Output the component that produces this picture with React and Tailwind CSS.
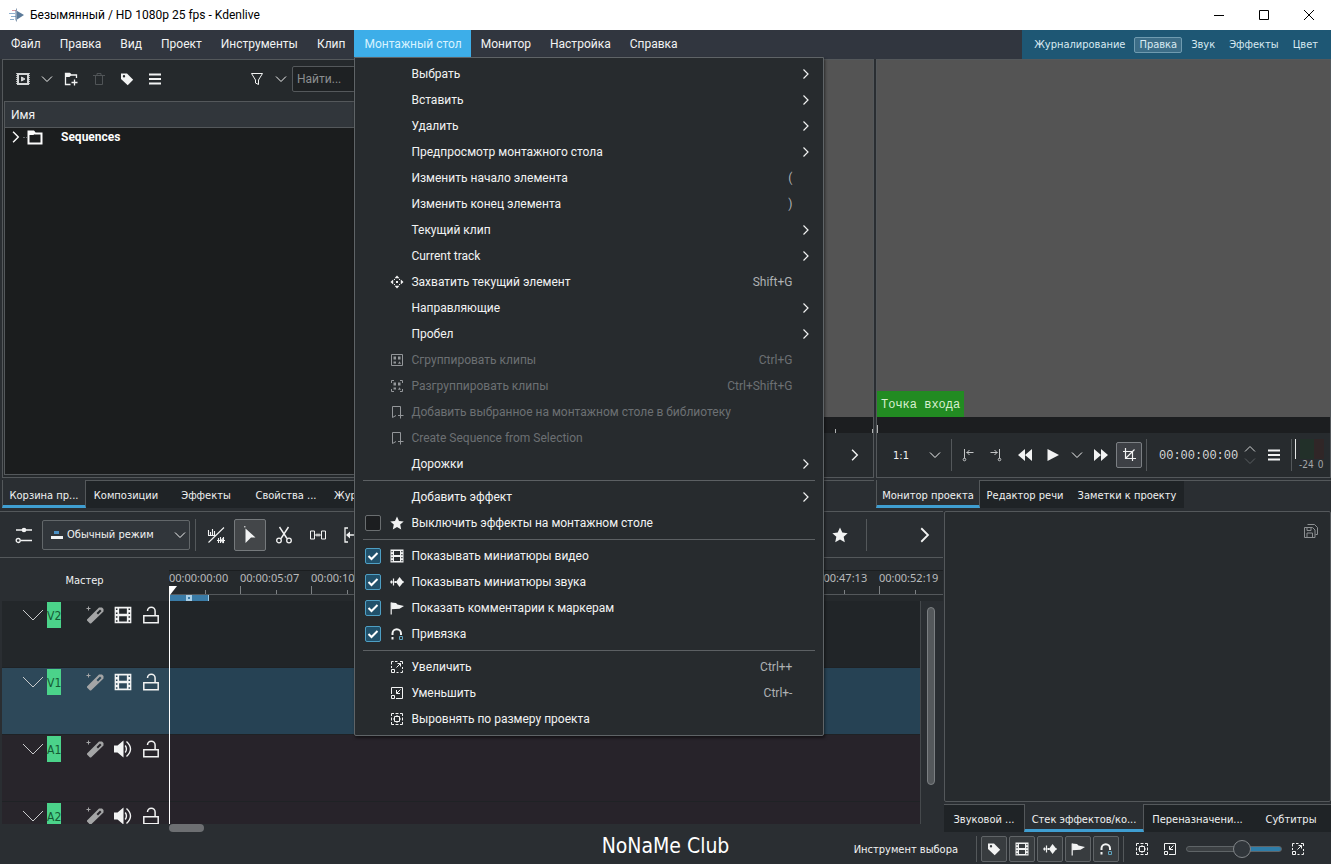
import { useState } from 'react';
import clsx from 'clsx';

const Svg = ({ size = 16, box = 16, className, children }) => (
  <svg
    width={size}
    height={size}
    viewBox={`0 0 ${box} ${box}`}
    fill="none"
    stroke="currentColor"
    className={clsx('shrink-0', className)}
    aria-hidden="true"
  >
    {children}
  </svg>
);

const ChevronDown = ({ size = 12, className }) => (
  <Svg size={size} box={12} className={className}>
    <path d="M1 3.5 6 8.5 11 3.5" />
  </Svg>
);

const ChevronRight = ({ size = 12, className }) => (
  <Svg size={size} box={12} className={className}>
    <path d="M3.5 1.5 8 6 3.5 10.5" strokeWidth="1.2" />
  </Svg>
);

const TagIcon = ({ size = 14 }) => (
  <Svg size={size} box={14}>
    <path
      d="M1 1.5h6l6.2 6.2-5.5 5.5L1 7ZM4 3a1.2 1.2 0 1 0 0 2.4A1.2 1.2 0 0 0 4 3Z"
      fill="currentColor"
      stroke="none"
      fillRule="evenodd"
    />
  </Svg>
);

const BurgerIcon = ({ size = 14 }) => (
  <Svg size={size} box={14}>
    <path d="M1 2.5h12M1 7h12M1 11.5h12" strokeWidth="2" />
  </Svg>
);

const ClipIcon = () => (
  <Svg size={14} box={14} className="text-[#d4d6d7]">
    <path d="M2 2h10v10H2z" strokeWidth="2" />
    <path d="M1 1v12M13 1v12" strokeWidth="1.6" strokeDasharray="1 1" />
    <path d="M5.5 5v4l3.5-2z" fill="currentColor" />
  </Svg>
);

const FolderAddIcon = () => (
  <Svg size={16}>
    <path d="M7.5 13.5H2.5V2.5h4l1.5 1.5h5.5V7M11.5 8.5v6M8.5 11.5h6" strokeWidth="1.3" />
    <path d="M2 2h5l1.5 2-2 2H2z" fill="currentColor" stroke="none" />
  </Svg>
);

const TrashIcon = () => (
  <Svg size={14} box={14}>
    <path d="M1 3.5h12M5 3.5v-2h4v2M3.5 3.5v9h7v-9" />
  </Svg>
);

const FunnelIcon = () => (
  <Svg size={14} box={14}>
    <path d="M1.5 1.5h11L8.5 8v4.5l-3-1.5V8Z" />
  </Svg>
);

const FolderIcon = () => (
  <Svg size={16}>
    <path d="M1.5 14.5v-12h5L8 4.5h6.5v10z" strokeWidth="2" />
    <path d="M1 2h6l1.5 2-2 2H1z" fill="currentColor" stroke="none" />
  </Svg>
);

const MoveIcon = ({ size = 14 }) => (
  <Svg size={size} box={14}>
    <path
      d="M7 .5 9.5 3.2h-5ZM7 13.5 9.5 10.8h-5ZM.5 7 3.2 4.5v5ZM13.5 7 10.8 4.5v5ZM6 6h2v2H6zM4 4h1v1H4zM9 4h1v1H9zM4 9h1v1H4zM9 9h1v1H9z"
      fill="currentColor"
      stroke="none"
    />
  </Svg>
);

const groupShapes = (
  <path d="M3.5 3.5H6v3H3.5zM8 3.5h2.5v3H8zM3.5 8.5H6v2H3.5zM8 10.8h3L9.5 8.2z" fill="currentColor" stroke="none" />
);

const GroupIcon = () => (
  <Svg size={14} box={14}>
    <path d="M1.5 1.5h11v11h-11z" />
    {groupShapes}
  </Svg>
);

const UngroupIcon = () => (
  <Svg size={14} box={14}>
    <path d="M4 1.5H1.5V4M10 1.5h2.5V4M4 12.5H1.5V10M10 12.5h2.5V10" />
    {groupShapes}
  </Svg>
);

const BookmarkAddIcon = () => (
  <Svg size={14} box={14}>
    <path d="M6 10.5l-3.5 2v-11h8v7M10.5 8v5.5M8 10.5h5.5" />
  </Svg>
);

const StarIcon = ({ size = 14 }) => (
  <Svg size={size} box={14}>
    <path d="m7 .5 2 4.4 4.7.5-3.5 3.2 1 4.8L7 11l-4.2 2.4 1-4.8L.3 5.4 5 4.9Z" fill="currentColor" stroke="none" />
  </Svg>
);

const FilmIcon = ({ size = 14 }) => (
  <Svg size={size} box={14}>
    <path
      d="M.5.5h13v13H.5zM4 2v4h6V2zM4 8v4h6V8zM1.5 2v1.2h1.2V2zM1.5 5v1.2h1.2V5zM1.5 8v1.2h1.2V8zM1.5 11v1.2h1.2V11zM11.3 2v1.2h1.2V2zM11.3 5v1.2h1.2V5zM11.3 8v1.2h1.2V8zM11.3 11v1.2h1.2V11z"
      fill="currentColor"
      stroke="none"
      fillRule="evenodd"
    />
  </Svg>
);

const WaveIcon = ({ size = 14 }) => (
  <Svg size={size} box={14}>
    <path d="M0 7h14M1.5 5.5v3M3.5 3.5v7M5.5 6v2" strokeWidth="1.2" />
    <path d="m9.5 2 4 5-4 5L6 7z" fill="currentColor" stroke="none" />
  </Svg>
);

const FlagIcon = ({ size = 14 }) => (
  <Svg size={size} box={14}>
    <path d="M1.2 1.5v12" strokeWidth="1.2" />
    <path d="M1.2 1.5 6 2l1.5 1.5L14 5 9.5 7.8l-8.3.4z" fill="currentColor" stroke="none" />
  </Svg>
);

const MagnetIcon = ({ size = 14 }) => (
  <Svg size={size} box={14}>
    <path d="M2.5 8V6.5a4 4 0 0 1 8.5 0V8" strokeWidth="2" />
    <path d="M2.5 10v2.5" strokeWidth="2" />
    <path d="M9.5 9.5h3v3h-3z" className="text-[#5fa3bd]" stroke="currentColor" />
  </Svg>
);

const ZoomInIcon = ({ size = 14 }) => (
  <Svg size={size} box={14}>
    <path d="M3.5 1.5h-2v3M1.5 6v2M5 1.5h2.5M12.5 7v2M12.5 10.5v2h-2M6.5 12.5h2M6.5 7.5l4-4M7.5 3.5h3v3M10 1.5h2.5V4M1.5 9.5h3v3h-3z" />
  </Svg>
);

const ZoomOutIcon = ({ size = 14 }) => (
  <Svg size={size} box={14}>
    <path d="M1.5 8V1.5h11v11H6M10.5 3.5l-4 4M6.5 4v3.5H10M1.5 9.5h3v3h-3z" />
  </Svg>
);

const ZoomFitIcon = ({ size = 14 }) => (
  <Svg size={size} box={14}>
    <path d="M1.5 4V1.5H4M10 1.5h2.5V4M4 12.5H1.5V10M10 12.5h2.5V10M5.5 1.5h3M5.5 12.5h3M1.5 5.5v3M12.5 5.5v3" />
    <path d="M4.5 4.5h5v5h-5zM7 3v1.5M7 9.5V11M3 7h1.5M9.5 7H11" />
  </Svg>
);

const LockIcon = () => (
  <Svg size={18} box={18}>
    <path d="M1.8 9.8h14.4v7H1.8zM5.500 5a3.800 3.800 0 0 1 7.600 0v4.800" strokeWidth="1.5" />
  </Svg>
);

const WandIcon = () => (
  <Svg size={18} box={18} className="text-[#a4a5a6]">
    <path
      d="M1 13.5 13 1.5h3l1.5 1.5v2.5L5 17.5H4L1 14.5ZM10.5 7 12 8.5 15.5 5 14 3.5Z"
      fill="currentColor"
      stroke="none"
      fillRule="evenodd"
    />
    <path d="M2.5.5v4M.5 2.5h4" />
  </Svg>
);

const SpeakerIcon = () => (
  <Svg size={18} box={18}>
    <path d="M0 5.5h3.500L9.500.5v17l-6-5H0z" fill="currentColor" stroke="none" />
    <path d="M11.2 5.5q2.500 3.500 0 7M12.500 1.500q8 7.500 0 15" strokeWidth="1.4" />
  </Svg>
);

const MixIcon = () => (
  <Svg size={18} box={18}>
    <path d="M1 4h16M5.5 14.5H17" strokeWidth="1.3" />
    <circle cx="9" cy="4" r="2.3" fill="currentColor" stroke="none" />
    <circle cx="3.2" cy="14.5" r="2" strokeWidth="1.3" />
  </Svg>
);

const NoWaveIcon = () => (
  <Svg size={18} box={18}>
    <path d="M1.5 16.5 17 1.5M1.5 4v5M3.5 6v3M5.5 3v6M7.5 5v4M1 9.5h8M10 14.5h8M11.5 12v5M13.5 11v6M16.5 11v6M14.5 14l2-2M14.5 15l2 2" strokeWidth="1.1" />
  </Svg>
);

const PointerIcon = () => (
  <Svg size={18} box={18}>
    <path d="m4.5 2.5 10 9H10L4.5 17z" fill="currentColor" stroke="none" />
    <path d="M3 .8h1.5" />
  </Svg>
);

const ScissorsIcon = () => (
  <Svg size={18} box={18}>
    <path d="m4.5 1 7.5 11.5M13.5 1 6 12.5" strokeWidth="1.4" />
    <circle cx="4" cy="14.5" r="2.3" strokeWidth="1.3" />
    <circle cx="14" cy="14.5" r="2.3" strokeWidth="1.3" />
  </Svg>
);

const SpacerIcon = () => (
  <Svg size={18} box={18}>
    <path d="M1.5 5h4v8h-4zM12.5 5h4v8h-4zM6 9h6M8 7.5v3M10 7.5v3" />
  </Svg>
);

const SlipIcon = () => (
  <Svg size={18} box={18}>
    <path d="M5 2H2v14h3M13 2h3v14h-3M4 9h10" strokeWidth="1.3" />
    <path d="m3 9 4-3.5v7z" fill="currentColor" stroke="none" />
  </Svg>
);

const AppIcon = () => (
  <Svg size={16}>
    <path d="M0 6.5h6M2 9.5h5M1 12.5h4" className="text-[#8fb0cf]" stroke="currentColor" />
    <path d="M3 3.5h4" className="text-[#d99aa5]" stroke="currentColor" />
    <path d="M6.5 3v10.5L15 8z" className="text-[#5b7a99]" fill="currentColor" stroke="none" />
    <path d="M7.5 1.5v13" className="text-[#8c9fb5]" stroke="currentColor" />
  </Svg>
);

const SaveIcon = () => (
  <Svg size={14} box={14} className="text-[#8d9092]">
    <path d="M3.5.5h7l3 3v7h-2M.5 13.5v-10h8L11 6v7.5zM3 3.5v3h4v-3M3 13V9h5.5v4" />
  </Svg>
);

const menuBefore = ['Файл', 'Правка', 'Вид', 'Проект', 'Инструменты', 'Клип'];
const menuAfter = ['Монитор', 'Настройка', 'Справка'];
const layouts = ['Журналирование', 'Правка', 'Звук', 'Эффекты', 'Цвет'];

const menuSections = [
  [
    { text: 'Выбрать', sub: true },
    { text: 'Вставить', sub: true },
    { text: 'Удалить', sub: true },
    { text: 'Предпросмотр монтажного стола', sub: true },
    { text: 'Изменить начало элемента', keys: '(' },
    { text: 'Изменить конец элемента', keys: ')' },
    { text: 'Текущий клип', sub: true },
    { text: 'Current track', sub: true },
    { text: 'Захватить текущий элемент', keys: 'Shift+G', icon: MoveIcon },
    { text: 'Направляющие', sub: true },
    { text: 'Пробел', sub: true },
    { text: 'Сгруппировать клипы', keys: 'Ctrl+G', icon: GroupIcon, disabled: true },
    { text: 'Разгруппировать клипы', keys: 'Ctrl+Shift+G', icon: UngroupIcon, disabled: true },
    { text: 'Добавить выбранное на монтажном столе в библиотеку', icon: BookmarkAddIcon, disabled: true },
    { text: 'Create Sequence from Selection', icon: BookmarkAddIcon, disabled: true },
    { text: 'Дорожки', sub: true },
  ],
  [
    { text: 'Добавить эффект', sub: true },
    { text: 'Выключить эффекты на монтажном столе', icon: StarIcon, check: false },
  ],
  [
    { text: 'Показывать миниатюры видео', icon: FilmIcon, check: true },
    { text: 'Показывать миниатюры звука', icon: WaveIcon, check: true },
    { text: 'Показать комментарии к маркерам', icon: FlagIcon, check: true },
    { text: 'Привязка', icon: MagnetIcon, check: true },
  ],
  [
    { text: 'Увеличить', keys: 'Ctrl++', icon: ZoomInIcon },
    { text: 'Уменьшить', keys: 'Ctrl+-', icon: ZoomOutIcon },
    { text: 'Выровнять по размеру проекта', icon: ZoomFitIcon },
  ],
];

const rulerMarks = [
  '00:00:00:00', '00:00:05:07', '00:00:10:14', '00:00:15:21', '00:00:21:03', '00:00:26:10',
  '00:00:31:16', '00:00:36:23', '00:00:42:05', '00:00:47:13', '00:00:52:19',
];

const tracks = [
  { id: 'V2', audio: false, head: 'bg-[#23272a]', body: 'bg-[#212528]' },
  { id: 'V1', audio: false, head: 'bg-[#2d4859]', body: 'bg-[#264254]' },
  { id: 'A1', audio: true, head: 'bg-[#28252b]', body: 'bg-[#27232a]' },
  { id: 'A2', audio: true, head: 'bg-[#28252b]', body: 'bg-[#27232a]' },
];

// docks and status bar use the narrower face, menus and the bin keep Roboto
const dockFont = "font-['DejaVu_Sans_Condensed','DejaVu_Sans',sans-serif] text-[11px]";

const MenuItem = ({ item }) => {
  const [checked, setChecked] = useState(item.check);
  const Icon = item.icon;
  const isCheck = item.check !== undefined;
  const Row = isCheck ? 'label' : 'button';

  return (
    <Row
      disabled={isCheck ? undefined : item.disabled}
      className={clsx(
        'flex h-[26px] w-full items-center pl-2.5 pr-[11px] text-left',
        item.disabled ? 'text-[#6c7073]' : 'text-[#f2f3f3] hover:bg-[#31363b]'
      )}
    >
      <span className="relative h-4 w-4 shrink-0">
        {isCheck && (
          <>
            <input
              type="checkbox"
              checked={checked}
              onChange={(e) => setChecked(e.target.checked)}
              className="block h-4 w-4 appearance-none rounded-xs border border-[#6a6e70] bg-[#1c1e20] checked:border-[#4e9fc4] checked:bg-[#21516b]"
            />
            {checked && (
              <Svg className="pointer-events-none absolute left-0 top-0 text-white">
                <path d="m3.5 8 3 3 6-6" strokeWidth="2" />
              </Svg>
            )}
          </>
        )}
      </span>
      <span className={clsx('ml-[9px] flex w-3.5 shrink-0', item.disabled && 'text-[#94979a]')}>{Icon && <Icon />}</span>
      <span className="ml-[7px] flex-1 whitespace-nowrap">{item.text}</span>
      <span className={item.disabled ? 'text-[#6c7073]' : 'text-[#aeb1b3]'}>{item.keys}</span>
      <span className="ml-2 flex w-3">{item.sub && <ChevronRight />}</span>
    </Row>
  );
};

const TimelineMenu = () => (
  <div className="absolute left-0 top-full z-20 w-[470px] rounded-b-xs border border-[#5f6467] bg-[#272b2e] py-[3px] shadow-[1px_2px_3px_#00000080]">
    {menuSections.map((section, i) => (
      <div key={i}>
        {i > 0 && <hr className="mx-2 my-[3px] border-[#5c6063]" />}
        {section.map((item) => (
          <MenuItem key={item.text} item={item} />
        ))}
      </div>
    ))}
  </div>
);

const DockTab = ({ active, className, children }) => (
  <button
    className={clsx(
      'h-7 whitespace-nowrap text-center text-[#f0f1f1]',
      active
        ? 'border-x border-b-3 border-x-[#54585b] border-b-[#3f9ed1] bg-[#2a2e32] pt-[7px]'
        : 'border-t border-t-[#54585b] bg-[#1f2326] pt-[3px]',
      className
    )}
  >
    {children}
  </button>
);

const IconButton = ({ label, className, children }) => (
  <button aria-label={label} className={clsx('flex shrink-0 items-center justify-center', className)}>
    {children}
  </button>
);

const Divider = ({ className }) => <span className={clsx('w-px shrink-0 bg-[#54585b]', className)} />;

const ProjectBin = () => (
  <section className="flex w-[500px] shrink-0 flex-col pl-0.5">
    <div className="flex min-h-0 flex-1 flex-col border border-[#54585b] bg-[#25292c] pb-0.5 pl-px font-['Roboto',sans-serif] text-xs">
      <div className="flex h-[41px] shrink-0 items-center pb-[3px] text-[#f2f3f3]">
        <IconButton label="Добавить клип" className="ml-[5px] w-7"><ClipIcon /></IconButton>
        <IconButton label="Список" className="w-5"><ChevronDown /></IconButton>
        <IconButton label="Создать папку" className="w-7"><FolderAddIcon /></IconButton>
        <IconButton label="Удалить клип" className="w-7 text-[#505457]"><TrashIcon /></IconButton>
        <IconButton label="Метки" className="w-7"><TagIcon /></IconButton>
        <IconButton label="Параметры" className="w-7"><BurgerIcon /></IconButton>
        <IconButton label="Фильтр" className="ml-[74px] w-7"><FunnelIcon /></IconButton>
        <IconButton label="Список фильтров" className="mr-px w-5"><ChevronDown /></IconButton>
        <input
          aria-label="Найти"
          placeholder="Найти..."
          className="h-[26px] w-40 rounded-xs border border-[#54585b] bg-[#1e2123] px-1 placeholder:text-[#8b8e90]"
        />
      </div>
      <div className="flex min-h-0 flex-1 flex-col border border-[#54585b] bg-[#1b1d1e]">
        <div className="h-[26px] shrink-0 border-b border-[#54585b] bg-[#31363b] pl-1.5 leading-[26px] text-[#f2f3f3]">Имя</div>
        <div className="flex h-[18px] items-center pl-1 text-[#fcfcfc]">
          <ChevronRight size={14} />
          <span className="w-1 border-t border-dotted border-[#65696c]" />
          <FolderIcon />
          <span className="ml-[18px] font-bold">Sequences</span>
        </div>
      </div>
    </div>
    <nav className="mt-0.5 flex">
      <DockTab active className="w-[84px]">Корзина пр...</DockTab>
      <DockTab className="w-20">Композиции</DockTab>
      <DockTab className="w-20">Эффекты</DockTab>
      <DockTab className="w-20">Свойства ...</DockTab>
      <DockTab className="flex-1 pl-2 text-left">Журнал действий</DockTab>
    </nav>
  </section>
);

const ClipMonitor = () => (
  <section className="flex min-w-0 flex-1 flex-col">
    <div className="flex min-h-0 flex-1 flex-col border border-[#54585b]">
      <div className="flex-1 bg-[#545454]" />
      <div className="flex h-4 items-end justify-end bg-[#1c1e20]">
        <span className="mr-9 h-1 w-px bg-[#b0b2b3]" />
        <span className="h-1 w-px bg-[#b0b2b3]" />
      </div>
      <div className="flex h-11 items-center justify-end bg-[#272b2e] text-[#f2f3f3]">
        <IconButton label="Ещё" className="mr-1 w-7"><ChevronRight size={14} /></IconButton>
      </div>
    </div>
    <div className="mt-0.5 h-7 border-t border-[#54585b]" />
  </section>
);

const ProjectMonitor = () => (
  <section className="flex w-[455px] shrink-0 flex-col">
    <div className="flex min-h-0 flex-1 flex-col border border-[#54585b]">
      <div className="flex flex-1 flex-col items-start justify-end bg-[#545454]">
        <span className="h-[26px] bg-[#228b22] px-1 font-['Liberation_Mono',monospace] text-xs leading-[28px] text-[#d7f0d0]">
          Точка входа
        </span>
      </div>
      <div className="flex h-4 items-end bg-[#1c1e20]">
        <span className="h-2 w-px bg-[#b0b2b3]" />
      </div>
      <div className="flex h-11 items-center bg-[#272b2e] text-[#f2f3f3]">
        <div className="relative w-[74px]">
          <select aria-label="Масштаб" className="h-6 w-full appearance-none pl-4 pt-0.5">
            <option>1:1</option>
          </select>
          <ChevronDown className="pointer-events-none absolute right-2.5 top-1.5" />
        </div>
        <Divider className="mr-0.5 h-8" />
        <IconButton label="Начало зоны" className="h-8 w-7 text-[#c4c6c7]">
          <Svg size={14} box={14}>
            <path d="M3.5 1v9.5M5.5 4.5h7M8.5 2 6 4.500 8.500 7" />
            <circle cx="3.5" cy="11.5" r="1.3" />
          </Svg>
        </IconButton>
        <IconButton label="Конец зоны" className="h-8 w-7 text-[#c4c6c7]">
          <Svg size={14} box={14}>
            <path d="M10.5 1v9.5M1.5 4.5h7M5.5 2 8 4.500 5.500 7" />
            <circle cx="10.5" cy="11.5" r="1.3" />
          </Svg>
        </IconButton>
        <IconButton label="Назад" className="ml-px h-8 w-7">
          <Svg size={14} box={14}>
            <path d="M7 1v12L0 7zM14 1v12L7 7z" fill="currentColor" stroke="none" />
          </Svg>
        </IconButton>
        <IconButton label="Воспроизвести" className="h-8 w-7">
          <Svg size={14} box={14}>
            <path d="M1.5 1v12L13 7z" fill="currentColor" stroke="none" />
          </Svg>
        </IconButton>
        <IconButton label="Режим воспроизведения" className="h-8 w-5"><ChevronDown /></IconButton>
        <IconButton label="Вперёд" className="h-8 w-7">
          <Svg size={14} box={14}>
            <path d="M0 1v12l7-6zM7 1v12l7-6z" fill="currentColor" stroke="none" />
          </Svg>
        </IconButton>
        <IconButton label="Режим правки" className="ml-px h-[26px] w-[26px] rounded-xs border border-[#7c8084] bg-[#3d4045]">
          <Svg size={14} box={14}>
            <path d="M3.5 0v10.5H14M1 3.5h9.5V13M4 10l8.5-8.5" strokeWidth="1.2" />
          </Svg>
        </IconButton>
        <Divider className="ml-1 h-8" />
        <input
          aria-label="Позиция"
          defaultValue="00:00:00:00"
          className="ml-3 w-[83px] bg-transparent pt-0.5 font-['Liberation_Mono',monospace] text-xs text-[#d5d7d8]"
        />
        <div className="flex w-4 flex-col items-center">
          <IconButton label="Больше" className="rotate-180 text-[#d0d2d3]"><ChevronDown size={12} /></IconButton>
          <IconButton label="Меньше" className="text-[#5a5e61]"><ChevronDown size={12} /></IconButton>
        </div>
        <IconButton label="Меню монитора" className="h-8 w-8"><BurgerIcon /></IconButton>
        <Divider className="ml-px h-8" />
        <div className="ml-[3px] flex h-8 flex-1 flex-col text-[10px] leading-3 text-[#a4a6a8]">
          <div className="flex h-5">
            <span className="w-px bg-[#e4e5e5]" />
            <span className="ml-1 w-3.5 bg-[#223029]" />
            <span className="w-2.5 bg-[#302627]" />
          </div>
          <div className="flex gap-1 pl-1"><span>-24</span><span>0</span></div>
        </div>
      </div>
    </div>
    <nav className="mt-0.5 flex">
      <DockTab active className="w-[104px]">Монитор проекта</DockTab>
      <DockTab className="w-[90px]">Редактор речи</DockTab>
      <DockTab className="w-[114px]">Заметки к проекту</DockTab>
      <span className="flex-1 border-t border-[#54585b]" />
    </nav>
  </section>
);

const TimelineToolbar = () => (
  <div className="flex h-[47px] shrink-0 items-center border-y border-[#54585b] text-[#f2f3f3]">
    <IconButton label="Настройки дорожек" className="ml-2.5 w-7"><MixIcon /></IconButton>
    <div className="relative ml-1 w-[148px]">
      <select
        aria-label="Режим правки"
        className="h-[30px] w-full appearance-none rounded-xs border border-[#62676a] bg-[#31363b] pl-6 pt-0.5"
      >
        <option>Обычный режим</option>
      </select>
      <Svg size={14} box={14} className="pointer-events-none absolute left-2 top-2">
        <path d="M1 9.5h12" strokeWidth="3" />
        <path d="M4 4.5h5" strokeWidth="3" className="text-[#4a90c4]" stroke="currentColor" />
      </Svg>
      <ChevronDown className="pointer-events-none absolute right-1 top-[9px]" />
    </div>
    <Divider className="ml-[5px] h-8" />
    <IconButton label="Смешать клипы" className="ml-1 mr-0.5 h-8 w-8"><NoWaveIcon /></IconButton>
    <IconButton label="Выделение" className="h-8 w-8 rounded-xs border border-[#75797c] bg-[#434649]"><PointerIcon /></IconButton>
    <IconButton label="Разрезать" className="ml-0.5 h-8 w-8"><ScissorsIcon /></IconButton>
    <IconButton label="Раздвижка" className="ml-0.5 h-8 w-8"><SpacerIcon /></IconButton>
    <IconButton label="Сдвиг" className="ml-0.5 h-8 w-8"><SlipIcon /></IconButton>
    <span className="flex-1" />
    <IconButton label="Избранные эффекты" className="w-8"><StarIcon size={16} /></IconButton>
    <Divider className="ml-2.5 mr-[42px] h-8" />
    <IconButton label="Ещё" className="mr-0.5 w-8"><ChevronRight size={18} /></IconButton>
  </div>
);

const TrackHead = ({ track }) => (
  <div className={clsx('flex w-[167px] shrink-0 items-start pt-[5px] text-[#f2f3f3]', track.head)}>
    <IconButton label="Свернуть" className="ml-5 h-[18px] w-[22px] text-[#c9cbcc]">
      <svg width="22" height="12" viewBox="0 0 22 12" fill="none" stroke="currentColor">
        <path d="M1 1 11 11 21 1" />
      </svg>
    </IconButton>
    <span className="-mt-1 ml-[3px] h-[26px] w-3.5 bg-[#4bd38a] text-center text-xs leading-[28px] text-[#155a34]">{track.id}</span>
    <IconButton label="Эффекты дорожки" className="ml-[25px]"><WandIcon /></IconButton>
    <IconButton label={track.audio ? 'Отключить звук' : 'Скрыть дорожку'} className="ml-2.5">
      {track.audio ? <SpeakerIcon /> : <FilmIcon size={18} />}
    </IconButton>
    <IconButton label="Заблокировать" className="ml-2.5"><LockIcon /></IconButton>
  </div>
);

const Timeline = () => (
  <section className="flex min-w-0 flex-1 flex-col">
    <TimelineToolbar />
    <div className="relative flex min-h-0 flex-1 flex-col">
      <div className="flex h-[43px] shrink-0">
        <div className="w-[169px] shrink-0 text-center leading-[45px] text-[#f0f1f1]">Мастер</div>
        <div className="mt-3 min-w-0 flex-1 overflow-hidden border-t border-[#1b1e20] bg-[#25292c]">
          <div className="flex h-6 border-b border-[#54585b] font-['Noto_Sans',sans-serif] leading-[14px] text-[#b9bbbd]">
            {rulerMarks.map((mark) => (
              <div key={mark} className="flex w-[71px] shrink-0 flex-col justify-between">
                <span>{mark}</span>
                <span className="flex items-end">
                  <span className="h-2 w-px bg-[#7d8184]" />
                  <span className="ml-[35px] h-1 w-px bg-[#7d8184]" />
                </span>
              </div>
            ))}
          </div>
          <div className="flex h-1.5 w-10 items-center justify-center border-x border-[#9dcbe6] bg-[#3a7ba6]">
            <span className="h-1.5 w-1.5 border-2 border-[#a9d0e8]" />
          </div>
        </div>
      </div>
      <div className="flex min-h-0 flex-1">
        <div className="flex min-w-0 flex-1 flex-col overflow-hidden border-r border-[#45494c] pl-0.5">
          {tracks.map((track) => (
            <div key={track.id} className="flex h-[67px] shrink-0 border-b border-[#1f2225]">
              <TrackHead track={track} />
              <div className={clsx('flex-1', track.body)} />
            </div>
          ))}
        </div>
        <div className="w-[22px] pl-1.5 pt-1.5">
          <div className="h-[178px] w-2 rounded-full border border-[#7b7f82] bg-[#54585b]" />
        </div>
      </div>
      <div className="h-2 shrink-0 pl-[169px]">
        <div className="h-2 w-[35px] rounded-full bg-[#6d6f72]" />
      </div>
      {/* playhead */}
      <div className="pointer-events-none absolute bottom-2 left-[169px] top-7 w-2">
        <svg width="8" height="9" className="block fill-white"><path d="M0 0h8L1 9H0z" /></svg>
        <div className="absolute bottom-0 left-0 top-0 w-px bg-white" />
      </div>
    </div>
  </section>
);

const EffectStack = () => (
  <section className="flex w-[387px] shrink-0 flex-col">
    <div className="flex flex-1 justify-end rounded-xs border border-[#54585b] bg-[#272b2e] p-3">
      <button aria-label="Сохранить" className="h-3.5"><SaveIcon /></button>
    </div>
    <nav className="mt-0.5 flex">
      <DockTab className="w-20">Звуковой ...</DockTab>
      <DockTab active className="w-[120px]">Стек эффектов/ко...</DockTab>
      <DockTab className="flex-1">Переназначени...</DockTab>
      <DockTab className="w-20">Субтитры</DockTab>
    </nav>
  </section>
);

const statusToggles = [
  { label: 'Метки', icon: TagIcon },
  { label: 'Миниатюры видео', icon: FilmIcon },
  { label: 'Миниатюры звука', icon: WaveIcon },
  { label: 'Комментарии', icon: FlagIcon },
  { label: 'Привязка', icon: MagnetIcon },
];

const StatusBar = () => (
  <footer className={clsx('flex h-8 shrink-0 items-center text-[#f2f3f3]', dockFont)}>
    <div className="flex-1" />
    <div className="self-start text-[21px] leading-7 text-white">NoNaMe Club</div>
    <div className="flex flex-1 items-center justify-end pt-px">
      <span className="mt-1">Инструмент выбора</span>
      <Divider className="ml-[18px] mr-1 h-[26px]" />
      <div className="flex gap-0.5">
        {statusToggles.map(({ label, icon: Icon }) => (
          <IconButton key={label} label={label} className="h-[26px] w-[26px] rounded-xs border border-[#606467] bg-[#383c3f]">
            <Icon />
          </IconButton>
        ))}
      </div>
      <Divider className="mx-1 h-[26px]" />
      <IconButton label="По размеру проекта" className="w-7"><ZoomFitIcon /></IconButton>
      <IconButton label="Уменьшить" className="w-7"><ZoomOutIcon /></IconButton>
      <input
        type="range"
        aria-label="Масштаб"
        min="0"
        max="100"
        defaultValue="60"
        className="mx-0.5 h-1.5 w-24 appearance-none rounded-full border border-[#5f6467] bg-[linear-gradient(90deg,#3c4043_58%,#2f7da8_58%)] [&::-webkit-slider-thumb]:h-[18px] [&::-webkit-slider-thumb]:w-[18px] [&::-webkit-slider-thumb]:appearance-none [&::-webkit-slider-thumb]:rounded-full [&::-webkit-slider-thumb]:border [&::-webkit-slider-thumb]:border-[#83878a] [&::-webkit-slider-thumb]:bg-[#31363b]"
      />
      <IconButton label="Увеличить" className="mr-[19px] w-7"><ZoomInIcon /></IconButton>
    </div>
  </footer>
);

const menuButton = 'h-[27px] pl-2.5 pr-[9px] whitespace-nowrap';

export default function App() {
  return (
    <div className="flex h-screen w-full flex-col overflow-hidden bg-[#2a2e32] font-['Roboto',sans-serif] text-xs">
      <header className="flex h-[30px] shrink-0 items-center bg-white text-black">
        <span className="ml-[9px] mr-[5px]"><AppIcon /></span>
        <h1 className="flex-1">Безымянный / HD 1080p 25 fps - Kdenlive</h1>
        <IconButton label="Свернуть окно" className="h-full w-[45px]">
          <Svg size={10} box={10}><path d="M0 5.5h10" /></Svg>
        </IconButton>
        <IconButton label="Развернуть" className="h-full w-[45px]">
          <Svg size={10} box={10}><path d="M.5.5h9v9h-9z" /></Svg>
        </IconButton>
        <IconButton label="Закрыть" className="h-full w-[45px]">
          <Svg size={10} box={10}><path d="m0 0 10 10M10 0 0 10" /></Svg>
        </IconButton>
      </header>

      <nav className="flex h-[29px] shrink-0 items-start bg-[#31363f] pl-px text-[#f2f3f3]">
        {menuBefore.map((name) => (
          <button key={name} className={menuButton}>{name}</button>
        ))}
        <div className="relative">
          <button className={clsx(menuButton, 'block bg-[#3daee9] text-[#d8f3ff]')}>Монтажный стол</button>
          <TimelineMenu />
        </div>
        {menuAfter.map((name) => (
          <button key={name} className={menuButton}>{name}</button>
        ))}
        <div className={clsx('ml-auto flex items-center gap-1 self-stretch bg-[#1e5774] pl-[7px] pr-2 text-[#d9eaf2]', dockFont)}>
          {layouts.map((name) => (
            <button
              key={name}
              className={clsx(
                'h-4 rounded-xs border px-1 leading-[14px]',
                name === 'Правка' ? 'border-[#6f9bb0] bg-[#3c6d87]' : 'border-transparent'
              )}
            >
              {name}
            </button>
          ))}
        </div>
      </nav>

      <main className={clsx('flex min-h-0 flex-1 flex-col', dockFont)}>
        <div className="flex min-h-0 flex-1 gap-0.5">
          <ProjectBin />
          <ClipMonitor />
          <ProjectMonitor />
        </div>
        <div className="mt-[3px] flex h-[321px] shrink-0 gap-px">
          <Timeline />
          <EffectStack />
        </div>
      </main>

      <StatusBar />
    </div>
  );
}
